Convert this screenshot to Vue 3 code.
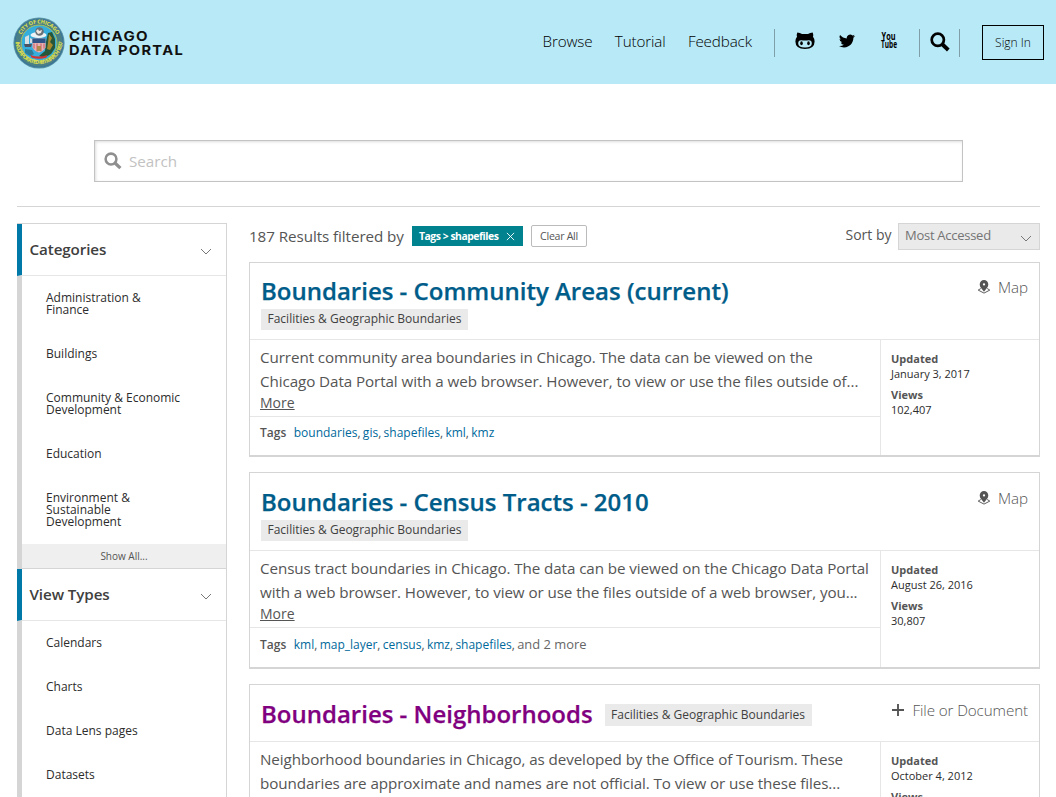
<script setup>
const nav = ['Browse', 'Tutorial', 'Feedback']

const facets = [
  {
    title: 'Categories',
    items: [
      ['Administration &', 'Finance'],
      ['Buildings'],
      ['Community & Economic', 'Development'],
      ['Education'],
      ['Environment &', 'Sustainable', 'Development'],
    ],
    showAll: true,
  },
  {
    title: 'View Types',
    items: [['Calendars'], ['Charts'], ['Data Lens pages'], ['Datasets']],
    showAll: false,
  },
]

const results = [
  {
    id: 'community',
    name: 'Boundaries - Community Areas (current)',
    category: 'Facilities & Geographic Boundaries',
    type: 'Map',
    lines: [
      'Current community area boundaries in Chicago. The data can be viewed on the',
      'Chicago Data Portal with a web browser. However, to view or use the files outside of...',
    ],
    tags: ['boundaries', 'gis', 'shapefiles', 'kml', 'kmz'],
    more: '',
    updated: 'January 3, 2017',
    views: '102,407',
  },
  {
    id: 'census',
    name: 'Boundaries - Census Tracts - 2010',
    category: 'Facilities & Geographic Boundaries',
    type: 'Map',
    lines: [
      'Census tract boundaries in Chicago. The data can be viewed on the Chicago Data Portal',
      'with a web browser. However, to view or use the files outside of a web browser, you...',
    ],
    tags: ['kml', 'map_layer', 'census', 'kmz', 'shapefiles'],
    more: 'and 2 more',
    updated: 'August 26, 2016',
    views: '30,807',
  },
  {
    id: 'neighborhoods',
    name: 'Boundaries - Neighborhoods',
    category: 'Facilities & Geographic Boundaries',
    type: 'File or Document',
    lines: [
      'Neighborhood boundaries in Chicago, as developed by the Office of Tourism. These',
      'boundaries are approximate and names are not official. To view or use these files...',
    ],
    tags: [],
    more: '',
    updated: 'October 4, 2012',
    views: '',
  },
]
</script>

<template>
  <div class="page">
    <header class="top">
      <a class="brand">
        <svg class="seal" viewBox="0 0 52 52">
          <defs>
            <path id="ringTop" d="M6.400 26a19.600 19.600 0 0 1 39.200 0" />
            <path id="ringBottom" d="M2.400 23.500a23.600 23.600 0 0 0 47.200 0" />
          </defs>
          <circle cx="26" cy="26" r="25.600" fill="#5b95a0" />
          <circle cx="26" cy="26" r="24.600" fill="#3470a0" />
          <circle cx="26" cy="26" r="21.300" fill="none" stroke="#4a7f86" stroke-width="5" />
          <circle cx="26" cy="26" r="18" fill="#35aede" stroke="#b4c24e" stroke-width="1" />
          <text class="ring"><textPath href="#ringTop" startOffset="50%" text-anchor="middle" textLength="44">CITY OF CHICAGO</textPath></text>
          <text class="ring"><textPath href="#ringBottom" startOffset="50%" text-anchor="middle" textLength="71">INCORPORATED 4th MARCH 1837</textPath></text>
          <path d="M35 16l4-1 3 7v9l-4 6-7 4-5-2 6-5 1-9z" fill="#26573b" />
          <path d="M36 17l3 4-2 4 3 3-3 5-3-1 1-6z" fill="#a88a2c" />
          <path d="M11 27h8l-1 3h-6z" fill="#4a5264" />
          <path d="M12 20l4-2v9h-4zM17 21l2 1v4h-2z" fill="#d6dfe4" />
          <ellipse cx="25.500" cy="18" rx="8" ry="3" fill="#edf3f4" />
          <circle cx="26.500" cy="14.500" r="4.300" fill="#687078" />
          <path d="M23 14l2-2 1 2 3-1-1 3-3 1z" fill="#f2e7de" />
          <path d="M19.500 21.500h13v9q-2 4-6.500 5-4.500-1-6.500-5z" fill="#e7b4b4" />
          <path d="M19.500 21.500h13V26h-13z" fill="#315385" />
          <path d="M21 26.500v5M24 26.500v8M28 26.500v8M31 26.500v5" stroke="#cf5664" stroke-width="1" />
          <path d="M24 29h4v5h-4z" fill="#b08a4a" />
          <path d="M12 32l7 1 2 4-4 2-5-3z" fill="#2c7d9a" />
          <path d="M17.500 38q8.500 3 17 0l-1 2.400q-7.500 2.600-15 0z" fill="#d03533" />
        </svg>
        <svg class="wordmark" viewBox="0 0 118 30">
          <text x="0" y="11" textLength="80" lengthAdjust="spacingAndGlyphs">CHICAGO</text>
          <text x="0" y="25" textLength="115" lengthAdjust="spacingAndGlyphs">DATA PORTAL</text>
        </svg>
      </a>
      <nav class="links">
        <a v-for="n in nav" :key="n">{{ n }}</a>
      </nav>
      <span class="rule r1"></span>
      <svg class="github" viewBox="0 0 20 18">
        <path d="M2.300.5Q5 .5 7 2.100h6Q15 .5 17.700.5q.9 2.200.3 4.300Q19.600 6.700 19.600 9.600q0 7.400-9.600 7.400T.4 9.600q0-2.900 1.600-4.800Q1.400 2.700 2.300.5z" />
        <path fill="#b8e9f7" d="M6.200 8.300q3.800.4 7.600 0 3 0 3 3.200 0 3.900-6.800 3.900t-6.800-3.900q0-3.200 3-3.200z" />
        <ellipse cx="6.500" cy="11.300" rx="1.300" ry="2" /><ellipse cx="13.500" cy="11.300" rx="1.300" ry="2" />
      </svg>
      <svg class="twitter" viewBox="0 0 24 20">
        <path d="M23.950 2.570a10 10 0 0 1-2.820.77 4.960 4.960 0 0 0 2.160-2.720c-.95.56-2 .96-3.130 1.180a4.920 4.920 0 0 0-8.380 4.480C7.690 6.090 4.070 4.130 1.640 1.160a4.920 4.920 0 0 0 1.520 6.570 4.900 4.900 0 0 1-2.230-.61v.06a4.920 4.920 0 0 0 3.950 4.830 5 5 0 0 1-2.210.08 4.940 4.940 0 0 0 4.600 3.420A9.870 9.870 0 0 1 0 17.540a13.990 13.990 0 0 0 7.550 2.210c9.140 0 14.300-7.720 14.000-14.640a9.940 9.940 0 0 0 2.400-2.540z" />
      </svg>
      <svg class="youtube" viewBox="0 0 17 17">
        <text x=".6" y="8" textLength="14" lengthAdjust="spacingAndGlyphs">You</text>
        <text x="0" y="16" textLength="16" lengthAdjust="spacingAndGlyphs">Tube</text>
      </svg>
      <span class="rule r2"></span>
      <svg class="find" viewBox="0 0 20 20"><circle cx="7.800" cy="7.800" r="6.100" /><path d="M12 12l6.300 6" /></svg>
      <span class="rule r3"></span>
      <a class="signin">Sign In</a>
    </header>

    <div class="searchbox">
      <svg viewBox="0 0 20 20"><circle cx="7.800" cy="7.800" r="6" /><path d="M12.200 12.200l6 5.800" /></svg>
      <span>Search</span>
    </div>

    <main class="content">
      <aside class="facets">
        <section v-for="f in facets" :key="f.title">
          <h2><span>{{ f.title }}</span><svg class="chev" viewBox="0 0 12 8"><path d="M1 1l5 5 5-5" /></svg></h2>
          <ul>
            <li v-for="(it, i) in f.items" :key="i"><span v-for="l in it" :key="l">{{ l }}</span></li>
          </ul>
          <div v-if="f.showAll" class="showall">Show All...</div>
        </section>
      </aside>

      <section class="list">
        <div class="bar">
          <span class="count">187 Results filtered by</span>
          <span class="chip"><b>Tags &gt; shapefiles</b><svg viewBox="0 0 10 10"><path d="M1 1l8 8M9 1l-8 8" /></svg></span>
          <span class="clear">Clear All</span>
          <span class="sortlabel">Sort by</span>
          <span class="sort">Most Accessed<svg class="chev" viewBox="0 0 12 8"><path d="M1 1l5 5 5-5" /></svg></span>
        </div>

        <article v-for="r in results" :key="r.id" class="card" :class="r.id">
          <div class="head">
            <div class="title">
              <h3>{{ r.name }}</h3>
              <span class="cat">{{ r.category }}</span>
            </div>
            <div class="type">
              <svg v-if="r.type === 'Map'" class="pin" viewBox="0 0 14 14">
                <path d="M3.800 8.500L1.200 10.100 7 13.100l5.800-3-2.600-1.600" fill="none" stroke="#5e5e5e" stroke-width="1" />
                <path fill="#555" fill-rule="evenodd" d="M7 .1a4.300 4.300 0 0 1 4.300 4.300C11.300 7.400 9.100 8.600 7 11.800 4.900 8.600 2.700 7.400 2.700 4.400A4.300 4.300 0 0 1 7 .1zm0 3.200a1.150 1.150 0 1 0 0 2.300 1.150 1.150 0 0 0 0-2.300z" />
              </svg>
              <svg v-else class="plus" viewBox="0 0 12 12"><path d="M6 0v12M0 6h12" /></svg>
              <span>{{ r.type }}</span>
            </div>
          </div>
          <div class="body">
            <div class="info">
              <div class="desc">
                <p v-for="l in r.lines" :key="l">{{ l }}</p>
                <a v-if="r.tags.length" class="more">More</a>
              </div>
              <div v-if="r.tags.length" class="tags">
                <b>Tags</b><span v-for="(t, i) in r.tags" :key="t" class="tag"><a>{{ t }}</a><template v-if="i < r.tags.length - 1 || r.more">, </template></span><span class="rest">{{ r.more }}</span>
              </div>
            </div>
            <dl class="meta">
              <dt>Updated</dt><dd>{{ r.updated }}</dd>
              <dt>Views</dt><dd>{{ r.views }}</dd>
            </dl>
          </div>
        </article>
      </section>
    </main>
  </div>
</template>

<style>
html, body { margin: 0; overflow: hidden; }
</style>

<style scoped>
.page { height: 797px; overflow: hidden; background: #fff; font-family: "Open Sans", sans-serif; color: #555; white-space: nowrap; }
.page *, .page { box-sizing: border-box; }
h2, h3, ul, p, dl, dd { margin: 0; padding: 0; }

.top { height: 84px; background: #b8e9f7; display: flex; align-items: flex-start; color: #000; }
.top > * { flex: none; }
.brand { display: flex; width: 542.500px; padding: 17px 0 0 13px; }
.seal { width: 52px; height: 52px; }
.ring { font: 700 5.400px "Open Sans", sans-serif; fill: #e2e34a; }
.wordmark { width: 118px; height: 30px; margin: 13px 0 0 4px; overflow: visible; }
.wordmark text { font: 700 13.400px "Inter", sans-serif; letter-spacing: 1.200px; fill: #111; }
.links { display: flex; width: 231.500px; gap: 22.300px; padding-top: 31px; font-size: 15.200px; line-height: 21px; font-weight: 300; letter-spacing: -.12px; }
.rule { width: 1px; height: 28px; margin-top: 29px; background: #7f9fa8; }
.github { width: 20px; height: 18px; margin: 32px 0 0 20px; }
.twitter { width: 16px; height: 14px; margin: 34px 0 0 24px; }
.youtube { width: 17px; height: 17px; margin: 32px 0 0 26px; overflow: visible; }
.youtube text { font: 700 10.800px "Open Sans", sans-serif; }
.r2 { margin-left: 21px; }
.find { width: 20px; height: 20px; margin: 32px 0 0 10px; fill: none; stroke: #000; stroke-width: 2.700; }
.find path { stroke-width: 3.800; }
.r3 { margin-left: 9px; }
.signin { width: 62px; height: 35px; margin: 25px 0 0 22px; border: 1px solid #000; font-size: 12px; font-weight: 300; line-height: 33px; text-align: center; }

.searchbox { display: flex; align-items: center; width: 869px; height: 42px; margin: 56px 0 0 94px; padding-left: 9px; border: 1px solid #c3c3c3; box-shadow: inset 1px 1px 3px #ddd; color: #c2c2c2; font-size: 15.200px; }
.searchbox svg { width: 18px; height: 18px; margin-right: 7px; fill: none; stroke: #8f8f8f; stroke-width: 2.800; }
.searchbox path { stroke-width: 3.600; }

.content { display: flex; gap: 22px; margin: 24px 16px 0 17px; border-top: 1px solid #d5d5d5; padding-top: 16px; }
.facets { width: 210px; height: 620px; flex: none; border: 1px solid #d5d5d5; border-left: 0; overflow: hidden; }
.facets section { border-left: 5px solid #d5d5d5; }
.facets section:last-child { height: 400px; }
.facets h2 { display: flex; justify-content: space-between; align-items: center; height: 52px; margin-left: -5px; padding: 0 14px 2px 7.500px; border-left: 5px solid #0079a9; border-bottom: 1px solid #e6e6e6; color: #404040; font-size: 15.200px; font-weight: 600; letter-spacing: -.1px; }
.facets h2 .chev { margin-top: 7px; }
.chev { width: 12px; height: 8px; fill: none; stroke: #777; stroke-width: 1; }
.facets ul { list-style: none; }
.facets li { display: flex; flex-direction: column; padding: 16px 24px; color: #2c2c2c; font-size: 12px; line-height: 12px; }
.showall { height: 25px; background: #efefef; border-bottom: 1px solid #d5d5d5; text-align: center; font-size: 10px; line-height: 24px; }

.list { width: 791px; flex: none; }
.bar { display: flex; align-items: center; height: 26px; margin-bottom: 13px; }
.count { font-size: 15.200px; width: 163px; letter-spacing: -.07px; }
.chip { display: flex; align-items: center; justify-content: space-between; width: 111px; height: 20px; padding: 0 8px 0 7px; background: #00838f; color: #fff; font-size: 10.400px; letter-spacing: -.47px; }
.chip svg { width: 9px; height: 9px; fill: none; stroke: #fff; stroke-width: 1; }
.clear { width: 56px; height: 22px; margin-left: 8px; border: 1px solid #bbb; border-radius: 2px; text-align: center; font-size: 10.600px; line-height: 20px; letter-spacing: -.28px; }
.sortlabel { margin-left: auto; margin-right: 6.500px; padding-bottom: 3px; font-size: 14px; }
.sort { display: flex; justify-content: space-between; align-items: center; align-self: flex-start; width: 142px; height: 27px; padding: 0 7px 3px 6px; border: 1px solid #d5d5d5; background: #eaeaea; color: #747474; font-size: 13px; letter-spacing: -.27px; }
.sort .chev { margin-top: 7px; }

.card { border: 1px solid #d5d5d5; border-bottom-width: 2px; margin-bottom: 15px; }
.community { height: 195px; }
.census { height: 197px; }
.neighborhoods { height: 197px; }
.head { display: flex; justify-content: space-between; height: 77px; padding: 11px 11px 0; border-bottom: 1px solid #e6e6e6; }
.census .head { height: 78px; padding-top: 12px; }
.neighborhoods .head { height: 57px; }
.title { display: flex; flex-direction: column; align-items: flex-start; }
.title h3 { height: 35px; font-size: 24px; line-height: 34px; font-weight: 600; color: #005c89; -webkit-text-stroke: .25px currentColor; }
.neighborhoods .title { flex-direction: row; }
.neighborhoods h3 { color: #800080; line-height: 36px; }
.cat { height: 21px; padding: 0 6px 0 6.500px; width: 207px; background: #eaeaea; color: #404040; font-size: 12px; line-height: 20px; }
.community .cat { line-height: 19px; }
.neighborhoods .cat { margin: 8px 0 0 12px; height: 22px; line-height: 22px; }
.type { display: flex; align-items: center; height: 25px; gap: 7px; font-size: 15.200px; font-weight: 300; letter-spacing: -.1px; }
.neighborhoods .type { height: 27px; gap: 8px; }
.pin { width: 14px; height: 14px; }
.plus { width: 12px; height: 12px; fill: none; stroke: #555; stroke-width: 1.900; }
.body { display: flex; height: 115px; }
.census .body { height: 116px; }
.info { width: 630px; }
.desc { height: 77px; padding: 5px 10px 0; border-bottom: 1px solid #e6e6e6; font-size: 15.200px; line-height: 24px; letter-spacing: -.083px; }
.more { display: block; height: 20px; line-height: 19px; font-size: 14px; text-decoration: underline; letter-spacing: 0; }
.tags { padding: 7px 10px 0; font-size: 12px; line-height: 17px; }
.census .tags { padding-top: 8px; }
.tags b { font-weight: 600; margin-right: 7.500px; }
.tag a { color: #00699b; }
.tag { white-space: pre; word-spacing: -.8px; }
.rest { font-size: 12.900px; color: #666; }
.meta { flex: 1; padding: 11px 0 0 10px; border-left: 1px solid #e6e6e6; font-size: 11px; line-height: 15px; }
.meta dt { font-weight: 700; }
.meta dd { color: #2c2c2c; margin-bottom: 6px; }
</style>
